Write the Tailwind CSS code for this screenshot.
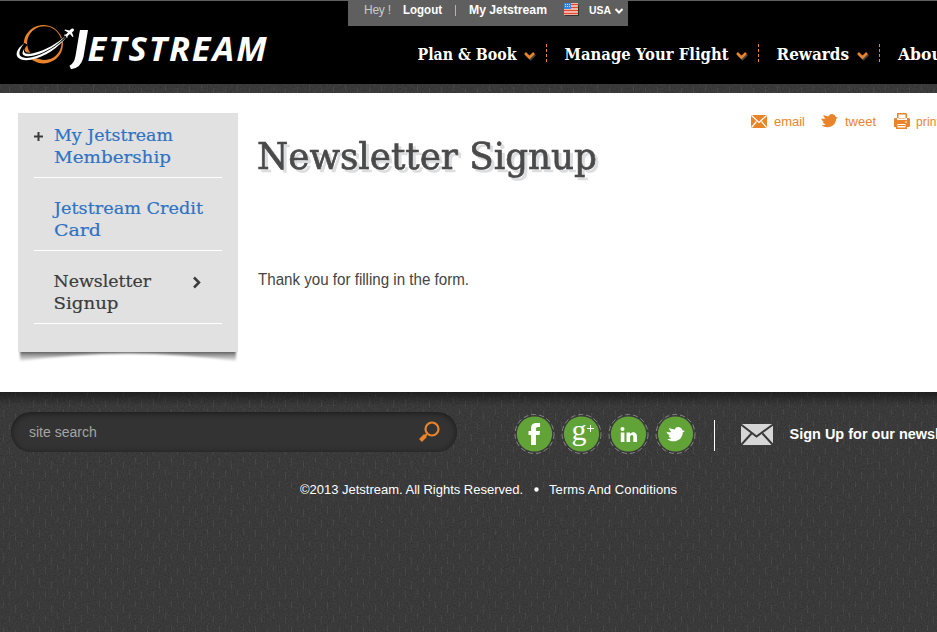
<!DOCTYPE html>
<html lang="en">
<head>
<meta charset="utf-8">
<title>Jetstream - Newsletter Signup</title>
<script src="https://cdn.jsdelivr.net/npm/@tailwindcss/browser@4"></script>
</head>
<body class="w-[937px] h-[632px] overflow-hidden bg-[#393939] font-['Liberation_Sans',Arial,sans-serif] relative">
<svg class="absolute inset-0 -z-10" width="937" height="632" aria-hidden="true">
  <defs>
    <filter id="grain" x="0" y="0" width="100%" height="100%" color-interpolation-filters="sRGB">
      <feTurbulence type="fractalNoise" baseFrequency="0.7 0.6" numOctaves="2" seed="4"/>
      <feColorMatrix values="0.09 0 0 0 0.181  0.09 0 0 0 0.181  0.09 0 0 0 0.181  0 0 0 0 1"/>
    </filter>
    <pattern id="weave" width="36" height="24" patternUnits="userSpaceOnUse">
      <path d="M3.500 2v7M15.500 5v8M27.500 1v6M9.500 15v7M21.500 13v6M33.500 16v7" stroke="#fff" stroke-opacity=".06"/>
    </pattern>
  </defs>
  <rect width="937" height="632" filter="url(#grain)"/>
  <rect width="937" height="632" fill="url(#weave)"/>
</svg>

<header class="relative h-[84px] bg-black border-t border-[#5f5f5f]">
  <div class="absolute left-[348px] top-0 w-[280px] h-[25px] bg-[#5f5f5f]">
    <svg class="block" width="280" height="25" font-family="'Liberation Sans',Arial,sans-serif" font-size="12">
      <text x="16" y="13" textLength="27" fill="#c9c9c9">Hey !</text>
      <g fill="#fff" font-weight="bold">
        <text x="55" y="13" textLength="39" lengthAdjust="spacingAndGlyphs">Logout</text>
        <text x="121" y="13" textLength="78" lengthAdjust="spacingAndGlyphs">My Jetstream</text>
        <text x="241" y="13" font-size="11" textLength="22" lengthAdjust="spacingAndGlyphs">USA</text>
      </g>
      <path d="M107.500 4v11" stroke="#c9a9ae"/>
      <rect x="217" y="4" width="14" height="11" fill="#333"/>
      <rect x="216" y="2" width="14" height="12" fill="#f6d9d0"/>
      <path d="M216 3.500h14M216 6.500h14M216 9.500h14M216 12.500h14" stroke="#e5462f" stroke-width="1.500"/>
      <rect x="216" y="2" width="7" height="6" fill="#3c84dc"/>
      <path d="M217 3.500h5M217 5.500h5" stroke="#b7d8fa" stroke-dasharray="1 1"/>
      <path d="M267.500 8l3.500 3.500 3.500-3.500" fill="none" stroke="#fff" stroke-width="2"/>
    </svg>
  </div>
  <div class="flex">
    <svg class="block shrink-0" width="418" height="83" viewBox="0 1 418 83" role="img">
      <path fill-rule="evenodd" fill="#e9842a" d="M43.300 25a19.600 19.200 0 1 0 .01 0zM44.300 26.300a17.200 16.800 0 1 1-.01 0z"/>
      <path d="M24 44C13 53 16 61 31 58.500C45 56 57 47 66 36C56 45 43 52 32 53.500C24 54.500 21 51 26 45z" fill="#000" stroke="#000" stroke-width="2"/>
      <path d="M24 43.500C12 52 15 62.500 31 59.700C45 57 58 48 67 36.500C57 46.500 44 54.500 32 57.200C19 60 15.500 54 24 43.500z" fill="#fff"/>
      <path d="M24.500 48.500C19 56 26 57.500 34 55.500C46 52.500 58 45 66 35.500C57 43.500 46 50 34 53C26 55 22.500 53.500 24.500 48.500z" fill="#fff"/>
      <path d="M73.500 29c1 .5.700 1.500-.5 2.500l-1 1 1.500 4-1 .5-2.500-3-2.500 2v1.500l-.8.500-.7-2-2-.6.500-.8h1.500l2-2.300-3.500-1.900.5-1 4.500 1 1-1c1.200-1 2.200-1.200 3-.4z" fill="#fff"/>
      <path d="M80 30h8l-4.500 27Q81 68 71 69.300l-1.500-3.600Q74 64 75.500 56l3.700-22z" fill="#fff"/>
      <text x="87.500" y="61.400" font-family="'Open Sans',sans-serif" font-size="34.500" font-weight="bold" font-style="italic" fill="#fff" textLength="179" lengthAdjust="spacing">ETSTREAM</text>
    </svg>
    <svg class="block shrink-0" width="519" height="83" viewBox="418 1 519 83" font-family="'DejaVu Serif',serif" font-size="16" font-weight="bold" fill="#fff">
      <text x="417.500" y="60" textLength="99" lengthAdjust="spacingAndGlyphs">Plan &amp; Book</text>
      <text x="564.500" y="60" textLength="164" lengthAdjust="spacingAndGlyphs">Manage Your Flight</text>
      <text x="776.500" y="60" textLength="72.500" lengthAdjust="spacingAndGlyphs">Rewards</text>
      <text x="898" y="60" textLength="52" lengthAdjust="spacingAndGlyphs">About</text>
      <g fill="none" stroke-width="2.500">
        <path d="M526 54.500l4.500 4.500 4.500-4.500M738 54.500l4.500 4.500 4.500-4.500M859 54.500l4.500 4.500 4.500-4.500" stroke="#444"/>
        <path d="M525 53l4.500 4.500 4.500-4.500M737 53l4.500 4.500 4.500-4.500M858 53l4.500 4.500 4.500-4.500" stroke="#e9842a"/>
        <path d="M546.500 44v20M758.500 44v20M879.500 44v20" stroke="#e9842a" stroke-width="1" stroke-dasharray="3 2"/>
      </g>
    </svg>
  </div>
</header>

<main class="mt-[9px] h-[299px] bg-white flex items-start pl-[18px] pt-5">
  <aside class="w-[220px] shrink-0">
    <nav class="h-[239px] bg-[#e1e1e1] px-4 text-[#2f72c4]">
      <div class="h-[65px] border-b border-white">
        <svg width="188" height="64" font-family="'DejaVu Serif',serif" font-size="17.500" fill="currentColor" stroke="currentColor" stroke-width=".2">
          <path d="M0 23.500h9M4.500 19v9" stroke="#3b3b3b" stroke-width="2"/>
          <text x="20" y="28" textLength="119" lengthAdjust="spacingAndGlyphs">My Jetstream</text>
          <text x="20" y="50" textLength="117" lengthAdjust="spacingAndGlyphs">Membership</text>
        </svg>
      </div>
      <div class="h-[73px] border-b border-white">
        <svg width="188" height="72" font-family="'DejaVu Serif',serif" font-size="17.500" fill="currentColor" stroke="currentColor" stroke-width=".2">
          <text x="20" y="36" textLength="149" lengthAdjust="spacingAndGlyphs">Jetstream Credit</text>
          <text x="20" y="58" textLength="47" lengthAdjust="spacingAndGlyphs">Card</text>
        </svg>
      </div>
      <div class="h-[73px] border-b border-white text-[#3b3b3b]">
        <svg width="188" height="72" font-family="'DejaVu Serif',serif" font-size="17.500" fill="currentColor" stroke="currentColor" stroke-width=".2">
          <text x="19.500" y="36" textLength="97.500" lengthAdjust="spacingAndGlyphs">Newsletter</text>
          <text x="19.500" y="58" textLength="65" lengthAdjust="spacingAndGlyphs">Signup</text>
          <path d="M160 26.500l5 5-5 5" fill="none" stroke-width="2.500"/>
        </svg>
      </div>
    </nav>
    <svg class="block" width="220" height="12" aria-hidden="true">
      <defs>
        <linearGradient id="curl" x2="0" y2="1"><stop stop-color="#444"/><stop offset="1" stop-color="#666" stop-opacity=".12"/></linearGradient>
        <filter id="soft" x="-5%" y="-30%" width="110%" height="170%"><feGaussianBlur stdDeviation=".9"/></filter>
      </defs>
      <path d="M2-2h216v11Q110-6 2 9z" fill="url(#curl)" filter="url(#soft)"/>
    </svg>
  </aside>
  <section class="w-[699px] h-[279px] pl-5 flex flex-col">
    <div class="h-4 flex justify-end">
      <svg width="186" height="18" viewBox="751 113 186 18" font-family="'Liberation Sans',Arial,sans-serif" font-size="12" fill="#e9842a">
        <rect x="751" y="115" width="16" height="13" rx="1"/>
        <path d="M751.500 115.500l7.500 7 7.500-7M751.500 127.500l5-6M766.500 127.500l-5-6" fill="none" stroke="#fff" stroke-width="1.200"/>
        <text x="774" y="126" textLength="31" lengthAdjust="spacingAndGlyphs">email</text>
        <path d="M821 118.500c2 .6 3.200.3 4.300-.2-1.300-1-1.800-2-1.900-3.300 2 .9 3.700 1.200 5.300 1.200.8-1.700 2.600-2.500 4.300-1.900 1.500.4 2.400 1.500 2.700 2.700l2.300.8-2 1.200c.2 4.300-3.500 8.200-8.500 8.200-2.400 0-4.400-.8-5.800-2.200 1.500.2 2.900-.1 3.900-.8-1.400-.2-2.400-.9-2.800-2.100l1.400-.1c-1.500-.7-2.700-1.900-3.200-3.500z"/>
        <text x="845" y="126" textLength="31" lengthAdjust="spacingAndGlyphs">tweet</text>
        <path fill-rule="evenodd" d="M897 113h9l1 1v4h-10zM898.500 114.500v4h7v-4zM895 118h2v2h10v-2h2l1 1v7l-1 1h-2v2h-11v-2h-2v-8zM897.500 124v3.500h8V124zM905 121.500h2v1h-2z"/>
        <path d="M898 125.500h7" stroke="#e9842a"/>
        <text x="916" y="126" textLength="24">print</text>
      </svg>
    </div>
    <h1 class="h-[141px]">
      <svg class="drop-shadow-[3px_3px_0_#dcdddf]" width="350" height="60" viewBox="258 129 350 60" font-family="'DejaVu Serif',serif" font-size="37.500">
        <text x="257" y="169" textLength="340" lengthAdjust="spacingAndGlyphs" fill="#4a4a4a" stroke="#4a4a4a" stroke-width=".7">Newsletter Signup</text>
      </svg>
    </h1>
    <p class="text-base leading-5 text-[#444]"><svg width="215" height="20" font-size="16" fill="currentColor"><text x="0" y="15" textLength="211" lengthAdjust="spacingAndGlyphs">Thank you for filling in the form.</text></svg></p>
  </section>
</main>

<footer class="h-[240px] bg-linear-to-b from-black/45 from-0% to-transparent to-[14px] pt-5">
  <div class="flex items-start pl-[11px]">
    <div class="flex h-10 w-[446px] shrink-0 items-center justify-between rounded-full bg-[#333] pl-[18px] pr-[17px] text-[14px] text-[#a5a5a5] shadow-[inset_0_1px_6px_rgba(0,0,0,0.55)]">
      <span>site search</span>
      <svg width="22" height="22" fill="none" stroke="#e9842a"><circle cx="14" cy="8" r="6.500" stroke-width="2.200"/><path d="M9 13l-2.500 2.500" stroke-width="2"/><path d="M7.500 14.500l-5 5" stroke-width="4"/></svg>
    </div>
    <svg class="block shrink-0" width="480" height="48" viewBox="457 412 480 48">
      <g fill="none" stroke="#858585" stroke-width="1" stroke-dasharray="5 3">
        <circle cx="534.500" cy="434" r="19.500"/><circle cx="581.500" cy="434" r="19.500"/><circle cx="628.500" cy="434" r="19.500"/><circle cx="675.500" cy="434" r="19.500"/>
      </g>
      <g fill="#62a338">
        <circle cx="534.500" cy="434" r="17.600"/><circle cx="581.500" cy="434" r="17.600"/><circle cx="628.500" cy="434" r="17.600"/><circle cx="675.500" cy="434" r="17.600"/>
      </g>
      <g fill="#fff">
        <path d="M540 423v4h-2c-1.500 0-2 .7-2 2v2h4l-.5 4H536v10h-5v-10h-2.500v-4h2.500v-2.500c0-3.700 2-5.500 5.500-5.500z"/>
        <text x="571.500" y="440" font-family="'Liberation Serif',serif" font-size="30">g</text>
        <path d="M587 428.500h7M590.500 425v7" stroke="#fff"/>
        <circle cx="622.500" cy="429" r="2"/>
        <path d="M620.800 432.500h3.600v9.500h-3.600zM626.500 432.500h3.500v1.500c2-2.800 7-2.200 7 2.500v5.500h-3.700v-5c0-3-3.200-2.500-3.200 0v5h-3.600z"/>
        <path transform="translate(666.500 427) scale(1.080) translate(-821 -114)" d="M821 118.500c2 .6 3.200.3 4.300-.2-1.300-1-1.800-2-1.900-3.300 2 .9 3.700 1.200 5.300 1.200.8-1.700 2.600-2.500 4.300-1.900 1.500.4 2.400 1.500 2.700 2.700l2.300.8-2 1.200c.2 4.300-3.500 8.200-8.500 8.200-2.400 0-4.400-.8-5.800-2.200 1.500.2 2.900-.1 3.900-.8-1.400-.2-2.400-.9-2.800-2.100l1.400-.1c-1.500-.7-2.700-1.900-3.200-3.500z"/>
        <path d="M714 420h1v31h-1z"/>
      </g>
      <rect x="741" y="424" width="32" height="21" rx="1" fill="#d6d6d6"/>
      <path d="M741 424.500l15.500 12 16.500-12M741 445l10.500-11.500M773 445l-10.500-11.500" fill="none" stroke="#393939" stroke-width="2"/>
      <text x="789.500" y="439" font-family="'Liberation Sans',Arial,sans-serif" font-size="14" font-weight="bold" fill="#fff" textLength="181" lengthAdjust="spacingAndGlyphs">Sign Up for our newsletter</text>
    </svg>
  </div>
  <div class="pl-[300px] pt-5">
    <svg width="380" height="20" font-size="13" fill="#fff">
      <text x="0" y="14" textLength="223">©2013 Jetstream. All Rights Reserved.</text>
      <circle cx="236.500" cy="9.500" r="2.200"/>
      <text x="249" y="14" textLength="128">Terms And Conditions</text>
    </svg>
  </div>
</footer>
</body>
</html>
